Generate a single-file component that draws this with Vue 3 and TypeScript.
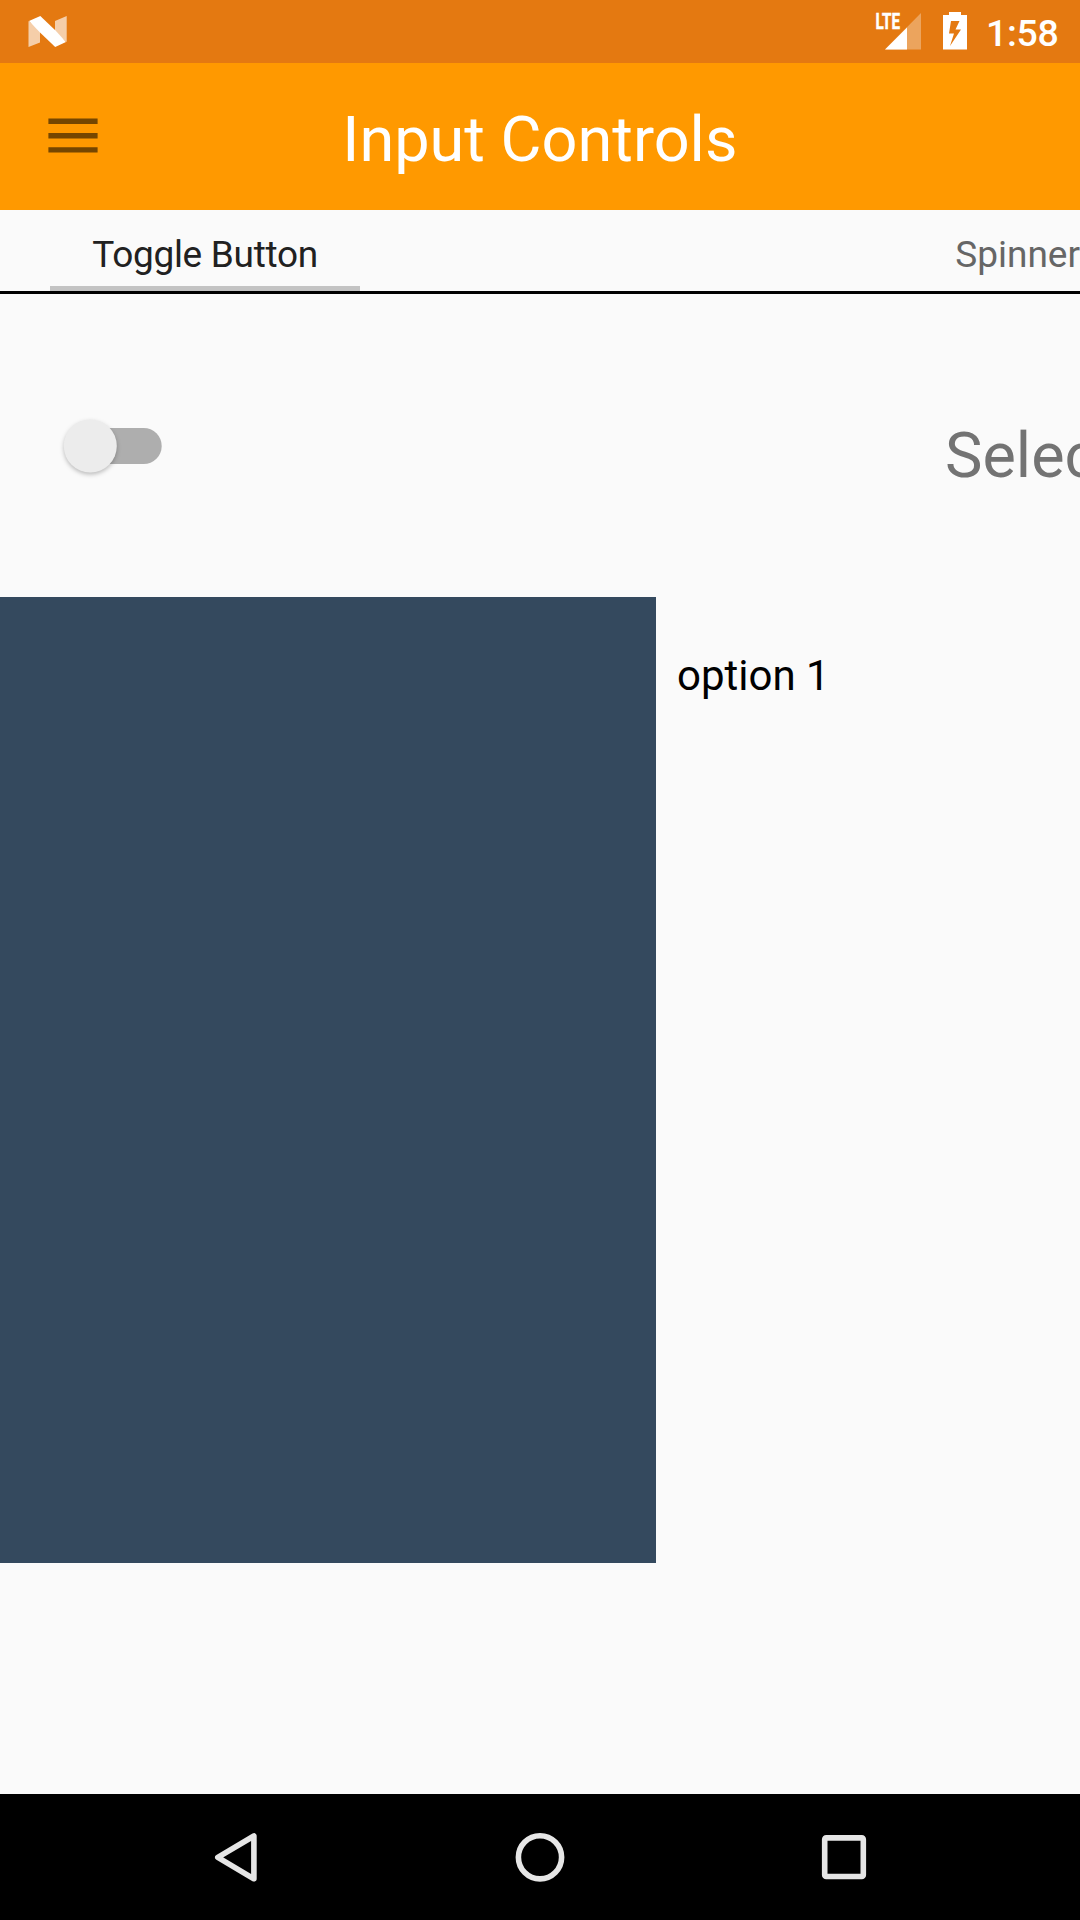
<script setup lang="ts">
interface Tab {
  label: string
  active: boolean
}

const title = 'Input Controls'
const tabs: Tab[] = [
  { label: 'Toggle Button', active: true },
  { label: 'Spinner', active: false },
]
const options: string[] = ['option 1']
</script>

<template>
  <div class="screen">
    <header class="status">
      <svg class="logo" width="40" height="34" viewBox="0 0 40 34">
        <path d="M.5 5 L12 14 V26.5 L.5 31Z M27 5 L38.7 0 V26 L27 17Z" fill="#fff" fill-opacity=".64" />
        <path d="M1 5 L12.3 0 L27.5 14.6 L38 26 L27.2 31 L12 16.5Z" fill="#fff" />
      </svg>
      <div class="status-right">
        <svg class="signal" width="46" height="38" viewBox="0 0 46 38">
          <path d="M45 1 V37.5 H9Z" fill="#fff" fill-opacity=".32" />
          <path d="M31 15.5 V37.5 H9Z" fill="#fff" />
          <path d="M0 0H27V17H0Z" fill="#e47911" />
          <text class="lte" x="-0.5" y="17" textLength="24.5" lengthAdjust="spacingAndGlyphs">LTE</text>
        </svg>
        <svg class="battery" width="24" height="38" viewBox="0 0 24 38">
          <path fill="#fff" fill-rule="evenodd" d="M6 0H18V3H24V37.5H0V3H6Z M8 9L6 21.5H11L7 34L18 17.5H12.5L16.5 9Z" />
        </svg>
        <span class="clock">1:58</span>
      </div>
    </header>

    <div class="appbar">
      <svg class="menu" width="50" height="36" viewBox="0 0 50 36">
        <path d="M.4 .6H49.6V6H.4Z M.4 15H49.6V20.4H.4Z M.4 29.2H49.6V34.6H.4Z" fill="#754600" />
      </svg>
      <h1>{{ title }}</h1>
    </div>

    <nav class="tabs">
      <div v-for="tab in tabs" :key="tab.label" class="tab" :class="{ active: tab.active }">{{ tab.label }}</div>
    </nav>

    <main class="content">
      <div class="controls">
        <svg class="switch" width="110" height="70" viewBox="0 0 110 70">
          <rect x="10" y="18" width="91.7" height="36" rx="18" fill="#aeaeae" />
          <circle class="thumb" cx="30.3" cy="36" r="26.5" fill="#ececec" />
        </svg>
        <div class="select">Select</div>
      </div>
      <div class="body">
        <div class="panel" />
        <ul class="options">
          <li v-for="option in options" :key="option">{{ option }}</li>
        </ul>
      </div>
    </main>

    <footer class="navbar">
      <svg width="60" height="60" viewBox="0 0 60 60"><path d="M11.8 30.3 L47.9 9 V51.8Z" /></svg>
      <svg width="60" height="60" viewBox="0 0 60 60"><circle cx="30" cy="30.3" r="21.6" /></svg>
      <svg width="60" height="60" viewBox="0 0 60 60"><rect x="10.7" y="10.9" width="38.6" height="38.6" rx="1.5" /></svg>
    </footer>
  </div>
</template>

<style>
body {
  margin: 0;
}
</style>

<style scoped>
.screen {
  display: flex;
  flex-direction: column;
  width: 1080px;
  height: 1920px;
  overflow: hidden;
  background: #fafafa;
  font-family: Roboto, "Liberation Sans", sans-serif;
}
svg {
  display: block;
  flex: none;
}
.status {
  display: flex;
  justify-content: space-between;
  flex: none;
  height: 63px;
  background: #e47911;
}
.logo {
  margin: 16px 0 0 28px;
}
.status-right {
  display: flex;
  width: 204px;
  padding-top: 12px;
}
.signal {
  overflow: visible;
}
.lte {
  font-size: 22px;
  font-weight: 700;
  fill: #fff;
  stroke: #fff;
  stroke-width: 0.5;
}
.battery {
  margin-left: 21px;
}
.clock {
  margin: 0 0 0 19px;
  font-size: 37.5px;
  font-weight: 500;
  line-height: 42px;
  letter-spacing: -0.3px;
  color: #fff;
}
.appbar {
  display: flex;
  flex: none;
  box-sizing: border-box;
  height: 147px;
  padding-left: 48px;
  background: #ff9900;
}
.menu {
  margin-top: 55px;
}
h1 {
  margin: 6px 0 0 244.3px;
  font-size: 63px;
  font-weight: 400;
  line-height: 141px;
  color: #fff;
}
.tabs {
  display: flex;
  justify-content: space-between;
  flex: none;
  box-sizing: border-box;
  height: 84px;
  padding-left: 50px;
  border-bottom: 3px solid #000;
}
.tab {
  box-sizing: border-box;
  height: 81px;
  padding-top: 13px;
  font-size: 37px;
  line-height: 64px;
  color: #666;
  white-space: nowrap;
}
.tab.active {
  width: 310px;
  border-bottom: 5px solid #c3c3c3;
  color: #212121;
  letter-spacing: -0.3px;
  text-align: center;
}
.content {
  display: flex;
  flex-direction: column;
  flex: 1;
}
.controls {
  display: flex;
  justify-content: space-between;
  height: 303px;
}
.switch {
  margin: 116px 0 0 60px;
  overflow: visible;
}
.thumb {
  filter: drop-shadow(0 2px 2px rgba(0, 0, 0, 0.25));
}
.select {
  width: 137px;
  height: 80px;
  box-sizing: border-box;
  margin-top: 122px;
  padding-left: 2px;
  overflow: hidden;
  font-size: 63px;
  line-height: 80px;
  color: #737373;
}
.body {
  display: flex;
  gap: 21px;
}
.panel {
  width: 656px;
  height: 966px;
  background: #34495e;
}
.options {
  margin: 0;
  padding: 49px 0 0;
  list-style: none;
  font-size: 42px;
  line-height: 60px;
  color: #000;
}
.navbar {
  display: flex;
  flex: none;
  gap: 244px;
  box-sizing: border-box;
  height: 126px;
  padding: 33px 0 0 206px;
  background: #000;
}
.navbar svg {
  fill: none;
  stroke: #e6e6e6;
  stroke-width: 5.6;
  stroke-linejoin: round;
}
</style>
